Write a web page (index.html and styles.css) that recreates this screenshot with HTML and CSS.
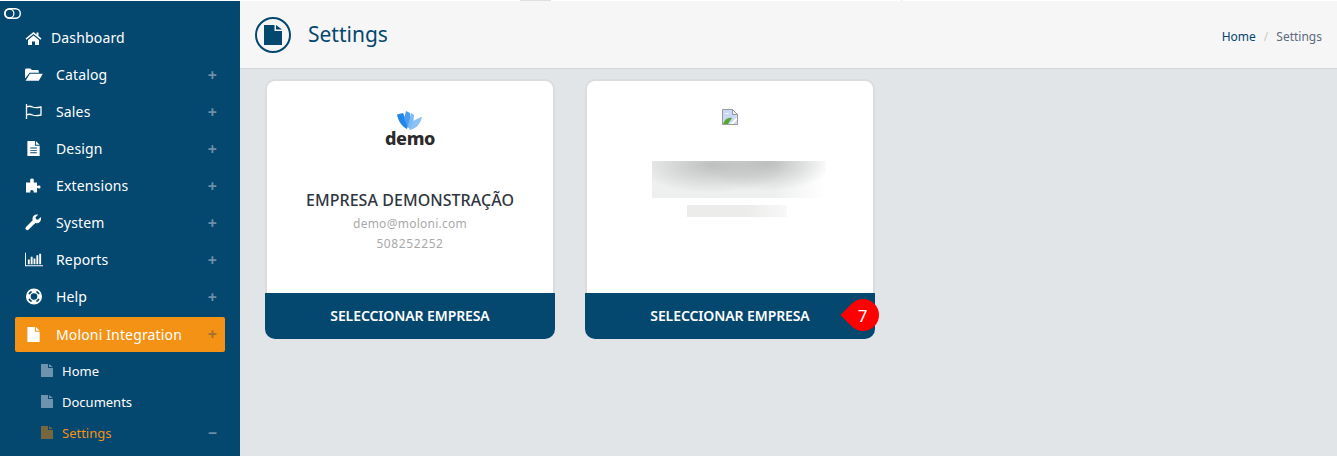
FILE: index.html
```html
<!DOCTYPE html>
<html lang="en">
<head>
    <meta charset="UTF-8">
    <meta name="viewport" content="width=device-width, initial-scale=1.0">
    <title>Moloni Integration - Settings</title>
    <link rel="stylesheet" href="styles.css">
</head>
<body>
    <div class="top-strip">
        <span class="strip-a"></span>
        <span class="strip-b"></span>
    </div>
    <div class="layout">
        <aside class="sidebar">
            <div class="toggle">
                <svg width="17" height="11" viewBox="0 0 17 11"><rect x="0.7" y="0.7" width="15.6" height="9.6" rx="4.8" fill="none" stroke="#fff" stroke-width="1.4"/><circle cx="5.5" cy="5.5" r="4.4" fill="none" stroke="#fff" stroke-width="1.2"/></svg>
            </div>
            <ul class="menu">
                <li class="menu-item short">
                    <svg class="icon" viewBox="0 0 17 16"><path fill="#fff" d="M8.5 2 0.5 8.6l.9 1.1L8.5 4l7.1 5.7.9-1.1-3-2.5V2.600h-2v1.900zM3 10v5h4v-3.500h3V15h4v-5L8.500 5.500z"/></svg>
                    <span>Dashboard</span>
                </li>
                <li class="menu-item">
                    <svg class="icon" viewBox="0 0 18 16"><path fill="#fff" d="M0 3.500C0 2.700.6 2 1.400 2h4l1.500 1.500h5.600c.7 0 1.300.6 1.300 1.300V6.300H4.500L.6 11.500H0zM4.900 7.300H17.800L13.800 14.300H.6z"/></svg>
                    <span>Catalog</span><b class="sign">+</b>
                </li>
                <li class="menu-item">
                    <svg class="icon" viewBox="0 0 18 16"><path fill="none" stroke="#fff" stroke-width="1.300" d="M1.500 .5v15M1.500 3.500c2-1 4-1 6 0s4 1 8.500 0v8c-4.500 1-6.500 1-8.500 0s-4-1-6 0"/></svg>
                    <span>Sales</span><b class="sign">+</b>
                </li>
                <li class="menu-item">
                    <svg class="icon" viewBox="0 0 18 18"><path fill="#fff" fill-rule="evenodd" d="M2 1h8v5h5v11H2zM11 1l4 4h-4zM5 8v1h7V8zM5 10.500v1h7v-1zM5 13v1h7v-1z"/></svg>
                    <span>Design</span><b class="sign">+</b>
                </li>
                <li class="menu-item">
                    <svg class="icon" viewBox="0 0 18 16"><path fill="#fff" d="M1 5h4.500C4.600 3 5 1 7 1s2.400 2 1.500 4H12v3.500c1.500-1 3.500-.8 3.500.9S13.500 11.400 12 10.300V15H8.500c.6-1.500-.3-2.500-1.700-2.500S5 13.500 5.500 15H1z"/></svg>
                    <span>Extensions</span><b class="sign">+</b>
                </li>
                <li class="menu-item">
                    <svg class="icon" viewBox="0 0 18 16"><path fill="#fff" d="M15.800 2.500 13 5.200l-2-.5-.5-2L13.200.3C11.500-.2 9.800.2 8.700 1.300 7.500 2.500 7.200 4.200 7.700 5.700L1 12.400c-.8.800-.8 2 0 2.700.8.800 2 .8 2.700 0l6.700-6.700c1.500.5 3.200.2 4.400-1 1.100-1.100 1.500-3.200 1-4.900z"/></svg>
                    <span>System</span><b class="sign">+</b>
                </li>
                <li class="menu-item">
                    <svg class="icon" viewBox="0 0 19 16"><path fill="#fff" d="M0 1h1v13h18v1H0zM3 8h2v5H3zM6 5h2v8H6zM9 7h2v6H9zM12 3.500h2V13h-2zM15 2h2v11h-2z"/></svg>
                    <span>Reports</span><b class="sign">+</b>
                </li>
                <li class="menu-item">
                    <svg class="icon" viewBox="0 0 18 18"><circle cx="9" cy="9" r="6" fill="none" stroke="#fff" stroke-width="5"/><circle cx="9" cy="9" r="5.800" fill="none" stroke="#04476f" stroke-width="1.800" pathLength="8" stroke-dasharray="0.8 1.200" stroke-dashoffset="-0.6"/></svg>
                    <span>Help</span><b class="sign">+</b>
                </li>
                <li class="menu-item active">
                    <svg class="icon" viewBox="0 0 18 18"><path fill="#fff" d="M2 1h8v5h5v11H2zM11 1l4 4h-4z"/></svg>
                    <span>Moloni Integration</span><b class="sign">+</b>
                </li>
            </ul>
            <ul class="submenu">
                <li class="sub-item">
                    <svg class="sub-icon" viewBox="0 0 12 13"><path d="M0 0h7v4h5v9H0zM8 0l4 3H8z"/></svg>
                    <span>Home</span>
                </li>
                <li class="sub-item">
                    <svg class="sub-icon" viewBox="0 0 12 13"><path d="M0 0h7v4h5v9H0zM8 0l4 3H8z"/></svg>
                    <span>Documents</span>
                </li>
                <li class="sub-item current">
                    <svg class="sub-icon" viewBox="0 0 12 13"><path d="M0 0h7v4h5v9H0zM8 0l4 3H8z"/></svg>
                    <span>Settings</span><b class="sign">&minus;</b>
                </li>
            </ul>
        </aside>

        <main class="content">
            <header class="page-head">
                <div class="head-icon">
                    <svg width="18" height="20" viewBox="0 0 18 20"><path fill="#04476f" d="M0 0h10.500v6H18v14H0zM12 0l6 4.500h-6z"/></svg>
                </div>
                <h1>Settings</h1>
                <div class="breadcrumb">
                    <a>Home</a><i>/</i><span>Settings</span>
                </div>
            </header>

            <section class="cards">
                <div class="card">
                    <div class="card-body">
                        <div class="logo">
                            <svg width="26" height="20" viewBox="0 0 26 20">
                                <path fill="#1f86ea" d="M0 3.500 6 2l5 12-1 4C4 15 1 9 0 3.500z"/>
                                <path fill="#4a9ef0" d="M9 0l4 2 1 12-3 3-4-9z"/>
                                <path fill="#7db9f4" d="M14 2l3 2-1 10-3 5-2-4z"/>
                                <path fill="#8cc1f6" d="M25 5.500c-1 6-5 12-12 13.500l3-9z"/>
                            </svg>
                            <span class="logo-word">demo</span>
                        </div>
                        <h2>EMPRESA DEMONSTRAÇÃO</h2>
                        <p class="mail">demo@moloni.com</p>
                        <p class="vat">508252252</p>
                    </div>
                    <a class="select-btn">SELECCIONAR EMPRESA</a>
                </div>

                <div class="card">
                    <div class="card-body">
                        <div class="logo">
                            <svg class="broken" width="16" height="16" viewBox="0 0 16 16">
                                <path fill="#c9d9f5" stroke="#9a9a9a" d="M.5.5h10l5 5v10H.5z"/>
                                <path fill="#fff" d="M3 5c1-1.500 3-1.500 4 0z"/>
                                <path fill="#5aa632" d="M1 15c2-5 5-7 9-6l-4 6z"/>
                                <path fill="#fff" d="M8 15l7-7v3l-4 4z"/>
                                <path fill="#eee" stroke="#9a9a9a" d="M10.500.5v5h5z"/>
                            </svg>
                        </div>
                        <div class="blur-name"></div>
                        <div class="blur-line"></div>
                    </div>
                    <a class="select-btn">SELECCIONAR EMPRESA</a>
                    <div class="step-badge"><span>7</span></div>
                </div>
            </section>
        </main>
    </div>
</body>
</html>
```

FILE: styles.css
```css
* {
    box-sizing: border-box;
}
html, body {
    height: 100%;
}
body {
    margin: 0;
    font-family: "Noto Sans", sans-serif;
    background-color: #e2e5e8;
    overflow: hidden;
}
.top-strip {
    height: 1px;
    background-color: #fff;
    display: flex;
    padding-left: 520px;
}
.strip-a {
    width: 31px;
    background-color: #e0e0e0;
}
.strip-b {
    width: 1px;
    margin-left: 350px;
    background-color: #e6e6e6;
}
.layout {
    display: flex;
    height: 455px;
}

/* sidebar */
.sidebar {
    width: 240px;
    flex-shrink: 0;
    background-color: #04476f;
    color: #fff;
}
.toggle {
    height: 18px;
    padding: 7px 0 0 4px;
    line-height: 0;
}
.menu, .submenu {
    list-style: none;
    margin: 0;
    padding: 0;
}
.submenu {
    padding-top: 3px;
}
.menu-item {
    height: 37px;
    margin: 0 15px;
    padding: 0 8px 0 10px;
    display: flex;
    align-items: center;
    font-size: 14px;
    letter-spacing: 0.15px;
}
.menu-item .icon {
    width: 18px;
    height: 17px;
    margin-right: 13px;
    flex-shrink: 0;
}
.menu-item.short .icon {
    width: 17px;
    height: 16px;
    margin-right: 9px;
}
.menu-item.active {
    height: 35px;
    margin-top: 2px;
    padding-bottom: 1px;
    background-color: #f39214;
    border-radius: 2px;
}
.sign {
    margin-left: auto;
    font-size: 16px;
    font-weight: 700;
    color: #6f8fa8;
}
.active .sign {
    color: #a4702f;
}
.sub-item {
    height: 31px;
    padding: 0 15px 0 41px;
    display: flex;
    align-items: center;
    font-size: 13px;
}
.sub-icon {
    width: 12px;
    height: 13px;
    margin-right: 9px;
    fill: #6e93ae;
}
.sub-item.current {
    color: #f39214;
}
.sub-item.current .sub-icon {
    fill: #76673f;
}
.sub-item .sign {
    padding-right: 8px;
}

/* page head */
.content {
    flex: 1;
    min-width: 0;
}
.page-head {
    height: 68px;
    background-color: #f6f6f6;
    border-bottom: 1px solid #d5d8db;
    padding: 0 15px;
    display: flex;
    align-items: center;
}
.head-icon {
    width: 36px;
    height: 36px;
    border: 2px solid #04476f;
    border-radius: 50%;
    display: flex;
    align-items: center;
    justify-content: center;
    margin-right: 17px;
}
.page-head h1 {
    margin: 0 0 1px;
    font-size: 21px;
    font-weight: 400;
    color: #04476f;
}
.breadcrumb {
    margin-left: auto;
    padding-top: 3px;
    font-size: 12px;
    color: #5c6b80;
}
.breadcrumb a {
    color: #04476f;
}
.breadcrumb i {
    font-style: normal;
    color: #c9c9c9;
    margin: 0 8px;
}

/* cards */
.cards {
    display: flex;
    gap: 30px;
    padding: 10px 0 0 25px;
}
.card {
    width: 290px;
    position: relative;
}
.card-body {
    height: 214px;
    background-color: #fff;
    border: 2px solid #dcdcdc;
    border-bottom: 0;
    border-radius: 10px 10px 0 0;
    text-align: center;
    padding-top: 30px;
    color: #999;
}
.logo {
    height: 40px;
    display: flex;
    flex-direction: column;
    align-items: center;
    line-height: 1;
}
.logo-word {
    font-size: 18px;
    font-weight: 800;
    letter-spacing: -0.4px;
    color: #2b2b2b;
    margin-top: -2px;
}
.broken {
    flex-shrink: 0;
    margin-top: -2px;
}
.card-body h2 {
    margin: 38px 0 0;
    font-size: 16px;
    font-weight: 500;
    line-height: 22px;
    letter-spacing: 0.05px;
    color: #2f3640;
}
.card-body p {
    margin: 0;
    font-size: 12px;
    line-height: 20px;
    color: #a9a9a9;
}
.card-body .mail {
    margin-top: 3px;
    letter-spacing: 0.25px;
}
.card-body .vat {
    letter-spacing: 0.6px;
}
.blur-name {
    width: 174px;
    height: 37px;
    margin: 10px 0 0 65px;
    background:
        radial-gradient(ellipse 75px 28px at 60px 4px, rgba(185,187,187,0.9), rgba(185,187,187,0)),
        radial-gradient(ellipse 65px 28px at 115px 2px, rgba(185,187,187,0.9), rgba(185,187,187,0)),
        linear-gradient(90deg, #eef0ef 70%, #fff);
}
.blur-line {
    width: 100px;
    height: 12px;
    margin: 7px 0 0 100px;
    background: linear-gradient(90deg, #ececeb 60%, #f8f8f8);
}
.select-btn {
    display: block;
    height: 46px;
    line-height: 46px;
    background-color: #04476f;
    color: #fff;
    text-align: center;
    font-size: 14px;
    font-weight: 600;
    letter-spacing: -0.1px;
    border-radius: 0 0 10px 10px;
}
.step-badge {
    position: absolute;
    left: 262px;
    top: 220px;
    width: 32px;
    height: 32px;
    background-color: #fe0000;
    border-radius: 50% 50% 50% 0;
    transform: rotate(45deg);
    display: flex;
    align-items: center;
    justify-content: center;
    color: #fff;
    font-size: 17px;
}
.step-badge span {
    transform: rotate(-45deg);
}
```
